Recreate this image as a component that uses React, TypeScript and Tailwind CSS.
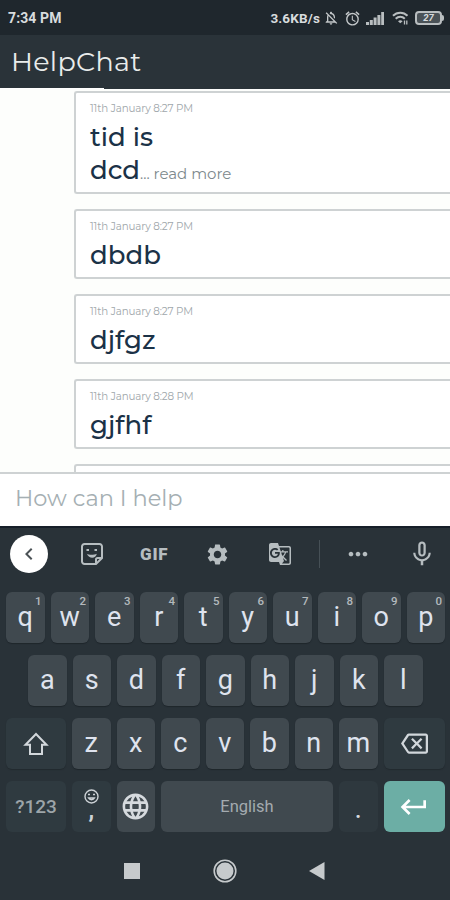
import React from 'react';
import {
  MdAlarm,
  MdChevronLeft,
  MdGTranslate,
  MdKeyboardReturn,
  MdLanguage,
  MdMicNone,
  MdMoreHoriz,
  MdOutlineBackspace,
  MdOutlineNotificationsOff,
  MdSettings,
} from 'react-icons/md';

interface Message {
  time: string;
  lines: string[];
  more?: boolean;
}

const messages: Message[] = [
  { time: '11th January 8:27 PM', lines: ['tid is', 'dcd'], more: true },
  { time: '11th January 8:27 PM', lines: ['dbdb'] },
  { time: '11th January 8:27 PM', lines: ['djfgz'] },
  { time: '11th January 8:28 PM', lines: ['gjfhf'] },
];

function StatusBar() {
  return (
    <div className="h-[35px] shrink-0 bg-[#1f272d] flex items-center justify-between pl-2 pr-[6px] text-[#d8dcde]">
      <span className="text-[14px] font-bold tracking-[0.1px] pt-[2px]">7:34 PM</span>
      <div className="flex items-center pt-px">
        <span className="text-[13.5px] font-bold mr-[3px] tracking-[0.15px]">3.6KB/s</span>
        <MdOutlineNotificationsOff className="w-4 h-4 mr-[5px] text-[#c3c7c9]" />
        <MdAlarm className="w-[17px] h-[17px] mr-[5px] text-[#c3c7c9]" />
        <svg width="18" height="13" viewBox="0 0 18 13" className="mr-[8px]" fill="#b9bec0">
          <rect x="0" y="10" width="3" height="3" />
          <rect x="3.8" y="8" width="3" height="5" />
          <rect x="7.6" y="5.5" width="3" height="7.5" />
          <rect x="11.4" y="3" width="3" height="10" />
          <rect x="15.2" y="0" width="2.8" height="13" />
        </svg>
        <svg width="17" height="14" viewBox="0 0 17 14" className="mr-[6px]" fill="none" stroke="#b9bec0" strokeWidth="2">
          <path d="M1 4.8C5 .7 11.500 .7 15.500 4.800" />
          <path d="M3.700 7.800c2.600-2.600 6.500-2.600 9.100 0" />
          <path d="M6 10.300c1.400-1.300 3.200-1.300 4.600 0L8.300 12.300z" fill="#b9bec0" stroke="none" />
          <path d="M12.500 9.500v4M14.800 9.500v4" strokeWidth="1.300" />
        </svg>
        <div className="flex items-center">
          <div className="w-[27px] h-[14px] rounded-[4px] border-2 border-[#b9bec0] flex items-center justify-center text-[9.5px] font-bold italic leading-none bg-[#4a5257]">
            27
          </div>
          <div className="w-[2px] h-[6px] rounded-r bg-[#b9bec0]" />
        </div>
      </div>
    </div>
  );
}

function MessageCard({ message }: { message: Message }) {
  const last = message.lines.length - 1;
  return (
    <div
      className={`shrink-0 bg-white border-2 border-r-0 border-[#ced2d3] rounded-l-[3px] pl-[14px] ${
        message.more ? 'h-[103px]' : 'h-[70px]'
      }`}
    >
      <div className="mt-[8px] h-[15px] text-[10.300px] leading-[15px] tracking-[-0.12px] text-[#a0a7ab]">
        {message.time}
      </div>
      <div className="mt-[5px] text-[26px] leading-[33px] font-medium text-[#1b3247]">
        {message.lines.map((line, i) => (
          <div key={line} className="whitespace-nowrap">
            {line}
            {message.more && i === last && (
              <span className="text-[15px] font-normal text-[#7d898d]">... read more</span>
            )}
          </div>
        ))}
      </div>
    </div>
  );
}

function Key({ label, hint }: { label: string; hint?: string }) {
  return (
    <div className="relative w-[38.5px] h-full shrink-0 rounded-[6px] bg-[#40494f] shadow-[0_1px_1px_#1e262b] flex items-center justify-center text-[27px] leading-none text-[#dfe3ee]">
      {label}
      {hint && (
        <span className="absolute top-[4px] right-[3px] text-[11.5px] leading-none font-medium text-[#b3b9bd]">{hint}</span>
      )}
    </div>
  );
}

function Toolbar() {
  return (
    <div className="h-[64px] flex items-center pl-[10px] text-[#b6bdc0]">
      <div className="w-[38px] h-[38px] -mt-[12px] rounded-full bg-white flex items-center justify-center text-[#4b5256]">
        <MdChevronLeft className="w-6 h-6" />
      </div>
      <svg width="22" height="22" viewBox="0 0 22 22" className="ml-[33px] -mt-[12px]" fill="none" stroke="currentColor" strokeWidth="2">
        <path d="M3.500 1h15A2.500 2.500 0 0 1 21 3.500V15l-6 6H3.500A2.500 2.500 0 0 1 1 18.500v-15A2.500 2.500 0 0 1 3.500 1z" />
        <path d="M15 20v-3.500A1.500 1.500 0 0 1 16.500 15H20" />
        <path d="M5.500 7h2.500M13.500 7H16" />
        <path d="M5.800 10.800c2 1.300 7 1.300 10 0-1 5-7.500 5.500-10 0z" fill="currentColor" stroke="none" />
      </svg>
      <span className="w-[31px] ml-[37px] -mt-[12px] text-[17px] leading-[22px] font-black tracking-[0.8px]">GIF</span>
      <MdSettings className="w-[25px] h-[25px] ml-[34px] -mt-[12px]" />
      <MdGTranslate className="w-6 h-6 ml-[38px] -mt-[12px]" />
      <div className="w-px h-[28px] ml-[27px] -mt-[12px] bg-[#465056]" />
      <MdMoreHoriz className="w-[28px] h-[28px] ml-[24px] -mt-[12px]" />
      <MdMicNone className="w-[30px] h-[30px] ml-[35px] -mt-[13px]" />
    </div>
  );
}

function Keyboard() {
  return (
    <div className="flex-1 bg-[#293238] border-t-2 border-[#171f29] flex flex-col">
      <Toolbar />
      <div className="pl-[6px] flex flex-col gap-[12px] [&>div]:h-[51px]">
        <div className="flex gap-[6px]">
          {'qwertyuiop'.split('').map((c, i) => (
            <Key key={c} label={c} hint={String((i + 1) % 10)} />
          ))}
        </div>
        <div className="flex gap-[6px] pl-[22px]">
          {'asdfghjkl'.split('').map((c) => (
            <Key key={c} label={c} />
          ))}
        </div>
        <div className="flex gap-[6px]">
          <div className="w-[60px] h-full rounded-[6px] bg-[#2f3a40] shadow-[0_1px_1px_#222a2f] flex items-center justify-center text-[#d2d7db]">
            <svg width="26" height="24" viewBox="0 0 26 24" fill="none" stroke="currentColor" strokeWidth="2">
              <path d="M13 2L2.500 12.800H7V22h12v-9.200h4.500z" />
            </svg>
          </div>
          {'zxcvbnm'.split('').map((c) => (
            <Key key={c} label={c} />
          ))}
          <div className="w-[61px] h-full rounded-[6px] bg-[#2f3a40] shadow-[0_1px_1px_#222a2f] flex items-center justify-center text-[#d2d7db]">
            <MdOutlineBackspace className="w-[27px] h-[27px]" />
          </div>
        </div>
        <div className="flex gap-[6px]">
          <div className="w-[60px] h-full rounded-[6px] bg-[#2f3a40] flex items-center justify-center text-[19px] font-medium text-[#9da5a9] pt-[2px]">
            ?123
          </div>
          <div className="w-[38.5px] h-full rounded-[6px] bg-[#2f3a40] flex flex-col items-center text-[#cdd2d6]">
            <svg width="15" height="15" viewBox="0 0 15 15" className="mt-[8px]" fill="none" stroke="currentColor" strokeWidth="1.400">
              <circle cx="7.500" cy="7.500" r="6.500" />
              <path d="M4 5.500h2M9 5.500h2M4.500 9c1.200 2.300 4.800 2.300 6 0z" />
            </svg>
            <span className="text-[23px] font-bold leading-[14px]">,</span>
          </div>
          <div className="w-[38.5px] h-full rounded-[6px] bg-[#40494f] flex items-center justify-center text-[#d6dade]">
            <MdLanguage className="w-[31px] h-[31px]" />
          </div>
          <div className="w-[172px] h-full rounded-[6px] bg-[#40494f] flex items-center justify-center text-[16.500px] text-[#a4abb0] pt-[2px]">
            English
          </div>
          <div className="w-[38.5px] h-full rounded-[6px] bg-[#2e383e] flex items-end justify-center pb-[11px] text-[23px] leading-[20px] font-medium text-[#d6dade]">
            .
          </div>
          <div className="w-[61.5px] h-full rounded-[6px] bg-[#6caea5] flex items-center justify-center text-white">
            <MdKeyboardReturn className="w-[32px] h-[32px]" />
          </div>
        </div>
      </div>
      <div className="flex-1 flex items-center pl-[124px] pb-[5px] pt-[14px]">
        <div className="w-[16px] h-[16px] bg-[#c6cacc]" />
        <svg width="24" height="24" viewBox="0 0 24 24" className="ml-[73px]">
          <circle cx="12" cy="12" r="10.800" fill="none" stroke="#c6cacc" strokeWidth="1.600" />
          <circle cx="12" cy="12" r="8.500" fill="#c6cacc" />
        </svg>
        <svg width="16" height="18" viewBox="0 0 16 18" className="ml-[72px]">
          <path d="M15.500 0v18L0 9z" fill="#c6cacc" />
        </svg>
      </div>
    </div>
  );
}

export default function App() {
  return (
    <div className="w-[450px] h-[900px] overflow-hidden flex flex-col bg-[#fdfefc] font-['Roboto',sans-serif]">
      <StatusBar />
      <header className="h-[54px] shrink-0 bg-[#2a3339] flex flex-col justify-between font-['Montserrat','Inter',sans-serif]">
        <h1 className="pl-[11px] pt-[8px] text-[27px] leading-[38px] tracking-[0.3px] text-[#e9eceb]">HelpChat</h1>
        <div className="w-[104px] h-[1px] bg-white" />
      </header>
      <main className="h-[383px] shrink-0 overflow-hidden pt-[2px] pl-[74px] flex flex-col gap-[15px] font-['Montserrat','Inter',sans-serif]">
        {messages.map((m, i) => (
          <MessageCard key={i} message={m} />
        ))}
        <div className="h-[70px] shrink-0 bg-white border-2 border-r-0 border-[#ced2d3] rounded-l-[3px]" />
      </main>
      <div className="h-[54px] shrink-0 bg-white border-t-2 border-[#ced2d3] pl-[15px] pt-[6px] text-[22.500px] leading-[36px] text-[#a5afb3] font-['Montserrat','Inter',sans-serif]">
        How can I help
      </div>
      <Keyboard />
    </div>
  );
}
